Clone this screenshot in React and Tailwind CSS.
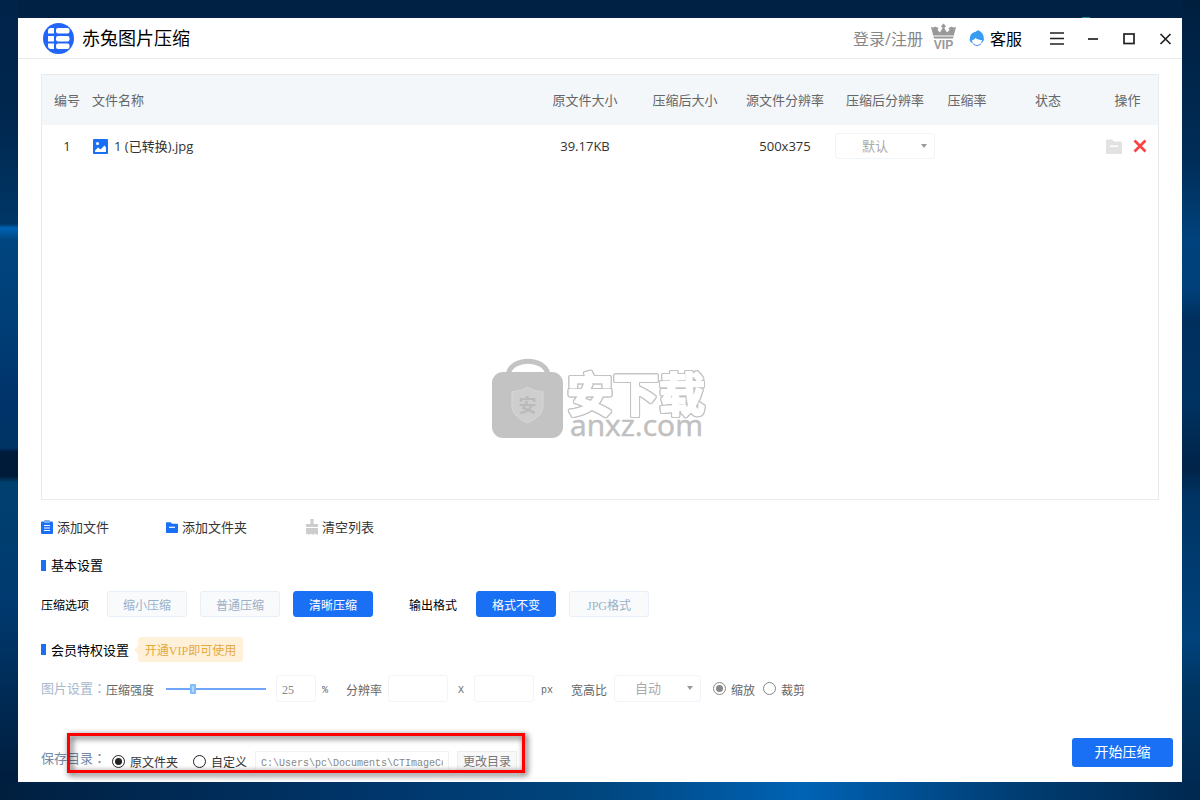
import { useState } from 'react'

const SANS = "font-['Open_Sans','Noto_Sans_CJK_SC',sans-serif]"
const SERIF = "font-['Liberation_Serif','Noto_Sans_CJK_SC',serif]"
const MONO = "font-['Liberation_Mono',monospace]"

const COLUMNS = [
  { label: '编号', className: 'w-[50px]' },
  { label: '文件名称', className: 'text-left' },
  { label: '原文件大小', className: 'w-[100px]' },
  { label: '压缩后大小', className: 'w-[100px]' },
  { label: '源文件分辨率', className: 'w-[100px]' },
  { label: '压缩后分辨率', className: 'w-[100px]' },
  { label: '压缩率', className: 'w-16' },
  { label: '状态', className: 'w-[98px]' },
  { label: '操作', className: 'w-[61px]' },
]

/** Desktop wallpaper, only its edges show around the window */
function Wallpaper() {
  return (
    <svg className="absolute inset-0 w-full h-full" viewBox="0 0 1200 800" preserveAspectRatio="none" aria-hidden="true">
      <defs>
        <linearGradient id="wp-left" x1="0" y1="0" x2="0" y2="1">
          <stop offset="0" stopColor="#00234a" />
          <stop offset="0.15" stopColor="#00274f" />
          <stop offset="0.28" stopColor="#003766" />
          <stop offset="0.285" stopColor="#0064b4" />
          <stop offset="0.3" stopColor="#00457f" />
          <stop offset="0.4" stopColor="#003f78" />
          <stop offset="0.5" stopColor="#00336a" />
          <stop offset="0.56" stopColor="#003465" />
          <stop offset="0.565" stopColor="#001a3a" />
          <stop offset="0.595" stopColor="#001a3a" />
          <stop offset="0.603" stopColor="#00406f" />
          <stop offset="0.75" stopColor="#003a70" />
          <stop offset="0.97" stopColor="#001e3f" />
        </linearGradient>
        <linearGradient id="wp-right" x1="0" y1="0" x2="0" y2="1">
          <stop offset="0" stopColor="#001f3f" />
          <stop offset="0.2" stopColor="#002d58" />
          <stop offset="0.3" stopColor="#00427d" />
          <stop offset="0.36" stopColor="#00407a" />
          <stop offset="0.4" stopColor="#002f5e" />
          <stop offset="0.5" stopColor="#003362" />
          <stop offset="0.585" stopColor="#002349" />
          <stop offset="0.62" stopColor="#003464" />
          <stop offset="0.8" stopColor="#00427c" />
          <stop offset="0.86" stopColor="#003562" />
          <stop offset="1" stopColor="#002850" />
        </linearGradient>
        <linearGradient id="wp-bottom">
          <stop offset="0" stopColor="#001f3f" />
          <stop offset="0.3" stopColor="#00356a" />
          <stop offset="0.5" stopColor="#00467f" />
          <stop offset="0.67" stopColor="#0063b5" />
          <stop offset="0.76" stopColor="#004f92" />
          <stop offset="0.85" stopColor="#003d72" />
          <stop offset="1" stopColor="#002850" />
        </linearGradient>
      </defs>
      <rect width="1200" height="800" fill="#002144" />
      <rect width="18" height="800" fill="url(#wp-left)" />
      <rect x="1182" width="18" height="800" fill="url(#wp-right)" />
      <rect y="782" width="1200" height="18" fill="url(#wp-bottom)" />
      <ellipse cx="1086" cy="22" rx="9" ry="5" fill="#2c9a97" />
    </svg>
  )
}

function LogoIcon() {
  return (
    <svg className="size-[31px]" viewBox="0 0 31 31" aria-hidden="true">
      <circle cx="15.5" cy="15.5" r="15.5" fill="#2266f8" />
      <g fill="#fff">
        <path d="M8 5h3v5.500H5V8a3 3 0 0 1 3-3z" />
        <path d="M5 13h6v5.500H5z" />
        <path d="M5 20.500h6V26H8a3 3 0 0 1-3-3z" />
        <rect x="13" y="5" width="13.500" height="5.500" rx="2" />
        <rect x="13" y="13" width="13.500" height="5.500" rx="2" />
        <rect x="13" y="20.500" width="13.500" height="5.500" rx="2" />
      </g>
    </svg>
  )
}

function VipIcon() {
  return (
    <svg className="w-[25px] h-[30px]" viewBox="0 0 25 30" fill="#999" aria-hidden="true">
      <path d="M12.500 0.500L15 3.200L13.300 5L16 9.500L18.500 7L17.500 5L21 3.500L22 4.500L25 4L22 15.500H3L0 4L3 4.500L4 3.500L7.500 5L6.500 7L9 9.500L11.700 5L10 3.200z" />
      <path d="M2.300 13h20.400" stroke="#fff" strokeWidth="1" />
      <text x="12.500" y="25.500" textAnchor="middle" fontFamily="Liberation Sans, sans-serif" fontWeight="700" fontSize="12">VIP</text>
    </svg>
  )
}

function ServiceIcon() {
  return (
    <svg className="size-4" viewBox="0 0 16 16" aria-hidden="true">
      <path d="M8.500 0.300C12 1 14.800 4 14.800 8.300C15.500 10.500 13.500 12.500 12 13.300H3.500C1 12 0.200 10.500 0.900 8.300C1 4.500 3.500 2.300 6.800 1.700z" fill="#3a9cf0" />
      <path d="M2.800 10.300C4.500 10 5.800 9.200 6.500 8C8 9.500 11 10 13 10.100C12.800 13.200 10.800 15 8 15S3.300 13.300 2.800 10.300z" fill="#fff" />
      <path d="M4 13.800Q8 17.200 12 13.800" fill="none" stroke="#5b8cf5" strokeWidth="1" />
    </svg>
  )
}

function PictureIcon() {
  return (
    <svg className="size-[15px]" viewBox="0 0 15 15" aria-hidden="true">
      <rect width="15" height="15" rx="1" fill="#1a70f5" />
      <circle cx="4.500" cy="4.500" r="1.500" fill="#fff" />
      <path d="M2 13V11.500L5 8.500L7.500 10.500L11.500 6.500L13 8.500V13z" fill="#fff" />
    </svg>
  )
}

function FolderIcon({ className }) {
  return (
    <svg className={className} viewBox="0 0 16 15" fill="currentColor" preserveAspectRatio="none" aria-hidden="true">
      <path d="M0 1.500Q0 0.500 1 0.500H6L8 2.500H15Q16 2.500 16 3.500V14Q16 15 15 15H1Q0 15 0 14z" />
      <path d="M4 7.200h8" stroke="#fff" strokeWidth="1.600" />
    </svg>
  )
}

function ClipboardIcon() {
  return (
    <svg className="w-3 h-[14px]" viewBox="0 0 12 14" aria-hidden="true">
      <rect y="1.500" width="12" height="12.500" rx="1" fill="#1a70f5" />
      <rect x="3" y="0" width="6" height="3" rx="1" fill="#7dadf9" />
      <path d="M3 5.500h6M3 8h6M3 10.500h6" stroke="#fff" strokeWidth="1" />
    </svg>
  )
}

function BrushIcon() {
  return (
    <svg className="w-3 h-4" viewBox="0 0 12 16" fill="#ccc" aria-hidden="true">
      <path d="M4.500 0h3v5H12v3H0V5h4.500z" />
      <path d="M0 9h12v6.500h-2l-1-1l-1 1H6l-1-1l-1 1H2l-1-1l-1 1z" />
    </svg>
  )
}

function Watermark() {
  return (
    <svg className="w-[218px] h-[92px]" viewBox="1 0 218 92" aria-hidden="true">
      <path d="M18 18C22 1 54 1 58 18" fill="none" stroke="#c3c3c3" strokeWidth="5" />
      <rect x="2" y="16" width="71" height="66" rx="11" fill="#c3c3c3" />
      <path d="M37.500 31C42 34 47 35.500 53 35.500V50C53 58 46 63 37.500 67C29 63 22 58 22 50V35.500C28 35.500 33 34 37.500 31z" fill="#cecece" stroke="#d8d8d2" />
      <text x="37.500" y="56" textAnchor="middle" fontFamily="Noto Sans CJK SC, sans-serif" fontWeight="700" fontSize="18" fill="#bababa">安</text>
      <text
        x="77"
        y="55"
        fontFamily="Noto Sans CJK SC, sans-serif"
        fontWeight="700"
        fontSize="46"
        fill="#fff"
        stroke="#fff"
        strokeWidth="2"
        strokeLinejoin="round"
        className="[filter:drop-shadow(1px_0_0_#c3c3c3)_drop-shadow(-1px_0_0_#c3c3c3)_drop-shadow(0_1px_0_#c3c3c3)_drop-shadow(0_-1px_0_#c3c3c3)]"
      >
        安下载
      </text>
      <text x="80" y="80" fontFamily="Open Sans, sans-serif" fontWeight="500" fontSize="30" fill="#c0c0c0" stroke="#c0c0c0" strokeWidth="0.5">anxz.com</text>
    </svg>
  )
}

function WindowButton({ label, children }) {
  return (
    <button type="button" aria-label={label} className="w-8 h-8 flex items-center justify-center text-[#222]">
      <svg className="size-4" viewBox="0 0 16 16" fill="none" stroke="currentColor" strokeWidth="1.700" aria-hidden="true">
        {children}
      </svg>
    </button>
  )
}

function TitleBar() {
  return (
    <header className="h-[41px] shrink-0 flex items-center border-b border-[#e9e9e9] pl-[25px] pr-px">
      <LogoIcon />
      <h1 className="ml-2 text-lg leading-6 text-black">赤兔图片压缩</h1>
      <div className="ml-auto pt-[2px] flex items-center">
        <a href="#login" className="text-base leading-6 text-[#888]">登录/注册</a>
        <span className="ml-2 mb-[2px]"><VipIcon /></span>
        <a href="#service" className="ml-[13px] flex items-center gap-[5px] text-base leading-6 text-black">
          <span className="mb-[2px]"><ServiceIcon /></span>
          客服
        </a>
      </div>
      <div className="ml-[19px] flex gap-1">
        <WindowButton label="菜单"><path d="M1 3h14M1 8.500h14M1 14h14" /></WindowButton>
        <WindowButton label="最小化"><path d="M3 9h10" /></WindowButton>
        <WindowButton label="最大化"><rect x="3" y="4" width="10" height="9.500" /></WindowButton>
        <WindowButton label="关闭"><path d="M3.500 4l10 10M13.500 4L3.500 14" /></WindowButton>
      </div>
    </header>
  )
}

function Dropdown({ label, option, className }) {
  return (
    <div className="relative">
      <select
        aria-label={label}
        className={`appearance-none block rounded-[3px] border border-[#eff4f9] bg-white text-[13px] leading-5 text-[#aaa] ${className}`}
      >
        <option>{option}</option>
      </select>
      <svg className="absolute right-2 top-[11px] w-[6px] h-1 pointer-events-none" viewBox="0 0 6 4" aria-hidden="true">
        <path d="M0 0h6L3 4z" fill="#999" />
      </svg>
    </div>
  )
}

function FileTable() {
  return (
    <section className="relative flex-1 mx-[23px] mt-[15px] border border-[#e8eaec]">
      <table className="w-full table-fixed text-[13px] leading-5">
        <thead>
          <tr className="h-[50px] bg-[#f3f7fa] text-[#666]">
            {COLUMNS.map((col) => (
              <th key={col.label} className={`pb-px font-normal whitespace-nowrap ${col.className}`}>{col.label}</th>
            ))}
          </tr>
        </thead>
        <tbody>
          <tr className="h-[42px] text-center text-[#333]">
            <td>1</td>
            <td>
              <span className="flex items-center gap-[6px] pl-px">
                <PictureIcon />
                1 (已转换).jpg
              </span>
            </td>
            <td>39.17KB</td>
            <td />
            <td>500x375</td>
            <td>
              <Dropdown label="压缩后分辨率" option="默认" className="w-full h-[26px] pl-[26px]" />
            </td>
            <td />
            <td />
            <td>
              <span className="flex items-center justify-center gap-[11px] pr-[2px]">
                <button type="button" aria-label="打开文件夹" className="text-[#e2e2e2]">
                  <FolderIcon className="w-4 h-[15px]" />
                </button>
                <button type="button" aria-label="删除">
                  <svg className="size-[14px]" viewBox="0 0 14 14" stroke="#fb4143" strokeWidth="2.700" aria-hidden="true">
                    <path d="M1.500 1.500l11 11M12.500 1.500l-11 11" />
                  </svg>
                </button>
              </span>
            </td>
          </tr>
        </tbody>
      </table>
      <div className="absolute inset-x-0 bottom-[51px] flex justify-center pointer-events-none">
        <Watermark />
      </div>
    </section>
  )
}

function SectionTitle({ children }) {
  return (
    <h2 className="flex items-center gap-[5px] text-[13px] leading-5 text-black">
      <span className="w-[5px] h-[11px] bg-[#1a70f5]" />
      {children}
    </h2>
  )
}

function OptionButton({ active, onClick, children }) {
  const look = active
    ? 'border-[#1a70f5] bg-[#1a70f5] text-white'
    : 'border-[#e8eff7] bg-[#f8fafc] text-[#9ab0c8]'
  return (
    <button
      type="button"
      aria-pressed={active}
      onClick={onClick}
      className={`w-20 h-[26px] pt-[3px] rounded-[3px] border text-xs ${SERIF} ${look}`}
    >
      {children}
    </button>
  )
}

function Radio({ name, label, checked, dim }) {
  const look = dim ? 'border-[#888] checked:bg-[#888]' : 'border-[#222] checked:bg-[#222]'
  return (
    <label className="flex items-center gap-[5px]">
      <input
        type="radio"
        name={name}
        defaultChecked={checked}
        className={`appearance-none size-[13px] rounded-full border p-[2px] bg-clip-content ${look}`}
      />
      <span className="pt-1">{label}</span>
    </label>
  )
}

/** Row caption with a colon that sits in the middle of its cell */
function RowLabel({ className, children }) {
  return (
    <span className={`shrink-0 whitespace-nowrap text-[13px] leading-5 ${className}`}>
      {children}
      <span className="font-['Noto_Sans_CJK_TC',sans-serif]" lang="zh-TW">：</span>
    </span>
  )
}

function BasicSettings() {
  const [level, setLevel] = useState('清晰压缩')
  const [format, setFormat] = useState('格式不变')
  return (
    <>
      <div className="mt-[14px]"><SectionTitle>基本设置</SectionTitle></div>
      <div className="mt-4 flex items-center text-xs text-black">
        <span className="mr-[18px] pt-1">压缩选项</span>
        <div className="flex gap-[13px]">
          {['缩小压缩', '普通压缩', '清晰压缩'].map((item) => (
            <OptionButton key={item} active={item === level} onClick={() => setLevel(item)}>{item}</OptionButton>
          ))}
        </div>
        <span className="ml-9 mr-[19px] pt-1">输出格式</span>
        <div className="flex gap-[13px]">
          {['格式不变', 'JPG格式'].map((item) => (
            <OptionButton key={item} active={item === format} onClick={() => setFormat(item)}>{item}</OptionButton>
          ))}
        </div>
      </div>
    </>
  )
}

function VipSettings() {
  const [strength, setStrength] = useState(25)
  const box = 'h-[27px] rounded-[3px] border border-[#f1f4f8] bg-white px-[5px] text-[#888]'
  return (
    <>
      <div className="mt-5 flex items-center">
        <SectionTitle>会员特权设置</SectionTitle>
        <span className="ml-[5px] w-0 h-0 border-y-4 border-y-transparent border-r-4 border-r-[#fff1d9]" />
        <span className={`w-[105px] h-[25px] text-center rounded-[3px] bg-[#fff1d9] text-xs leading-7 text-[#e6a93c] ${SERIF}`}>
          开通VIP即可使用
        </span>
      </div>
      <div className={`mt-[13px] flex items-center text-xs text-[#666] ${SERIF}`}>
        <RowLabel className="w-[65px] text-[#a9b9cb]">图片设置</RowLabel>
        <label className="flex items-center gap-3">
          <span className="pt-1">压缩强度</span>
          <input
            type="range"
            min="0"
            max="100"
            value={strength}
            onChange={(e) => setStrength(Number(e.target.value))}
            className="appearance-none w-[100px] h-[10px] bg-transparent [&::-webkit-slider-runnable-track]:h-[2px] [&::-webkit-slider-runnable-track]:bg-[#6ea5fa] [&::-webkit-slider-thumb]:appearance-none [&::-webkit-slider-thumb]:w-[6px] [&::-webkit-slider-thumb]:h-[10px] [&::-webkit-slider-thumb]:-mt-1 [&::-webkit-slider-thumb]:rounded-[1px] [&::-webkit-slider-thumb]:border-2 [&::-webkit-slider-thumb]:border-[#7fbcfc] [&::-webkit-slider-thumb]:bg-[#b5dafd]"
          />
        </label>
        <input
          type="text"
          aria-label="压缩强度百分比"
          value={strength}
          onChange={(e) => setStrength(Number(e.target.value) || 0)}
          className={`ml-[10px] w-10 pt-1 ${box}`}
        />
        <span className={`ml-[6px] pt-1 text-[10px] ${MONO}`}>%</span>
        <span className="ml-[18px] mr-[6px] pt-1">分辨率</span>
        <input type="text" aria-label="宽" className={`w-[60px] ${box}`} />
        <span className={`w-[26px] text-center pt-1 text-[10px] ${MONO}`}>X</span>
        <input type="text" aria-label="高" className={`w-[60px] ${box}`} />
        <span className={`ml-[7px] pt-1 text-[10px] ${MONO}`}>px</span>
        <span className="ml-[18px] mr-[7px] pt-1">宽高比</span>
        <Dropdown label="宽高比" option="自动" className="w-[87px] h-[27px] pl-5" />
        <div className="ml-3 flex gap-2">
          <Radio name="fit" label="缩放" checked dim />
          <Radio name="fit" label="裁剪" dim />
        </div>
      </div>
    </>
  )
}

function SaveBar() {
  return (
    <footer className="relative mt-[31px] mb-[9px] h-10 shrink-0 flex items-center justify-between pl-[23px] pr-[9px]">
      <div className="flex items-center pt-4 text-xs text-[#333]">
        <RowLabel className="w-[71px] mb-[6px] text-[#7288a5]">保存目录</RowLabel>
        <Radio name="dir" label="原文件夹" checked />
        <span className="ml-[15px]"><Radio name="dir" label="自定义" /></span>
        <input
          type="text"
          aria-label="保存路径"
          readOnly
          value="C:\Users\pc\Documents\CTImageCompress"
          className={`ml-2 mt-[2px] w-[194px] h-[22px] px-[5px] pt-[2px] border border-[#eff3f7] bg-white text-[10px] text-[#888] ${MONO}`}
        />
        <button type="button" className="ml-2 mt-[2px] w-[60px] h-[22px] border border-[#ededed] bg-[#f8f8f8] text-[#777]">更改目录</button>
      </div>
      <button type="button" className="mb-[2px] w-[101px] h-[29px] rounded-[3px] bg-[#1a70f5] text-sm text-white">开始压缩</button>
      <div className="absolute left-[49px] top-0 w-[458px] h-10 border-3 border-[#ff0000] pointer-events-none drop-shadow-[2px_2px_3px_rgba(0,0,0,0.8)]" />
    </footer>
  )
}

export default function App() {
  return (
    <div className={`relative min-h-screen p-[18px] flex flex-col ${SANS}`}>
      <Wallpaper />
      <main className="relative flex-1 flex flex-col bg-white">
        <TitleBar />
        <FileTable />
        <div className="px-[23px]">
          <div className="mt-[13px] h-7 flex items-center text-[13px] leading-5 text-[#333]">
            <button type="button" className="w-[125px] flex items-center gap-1">
              <ClipboardIcon />
              添加文件
            </button>
            <button type="button" className="w-[140px] flex items-center gap-1">
              <FolderIcon className="w-3 h-[11px] text-[#1a70f5]" />
              添加文件夹
            </button>
            <button type="button" className="flex items-center gap-1">
              <BrushIcon />
              清空列表
            </button>
          </div>
          <BasicSettings />
          <VipSettings />
        </div>
        <SaveBar />
      </main>
    </div>
  )
}
